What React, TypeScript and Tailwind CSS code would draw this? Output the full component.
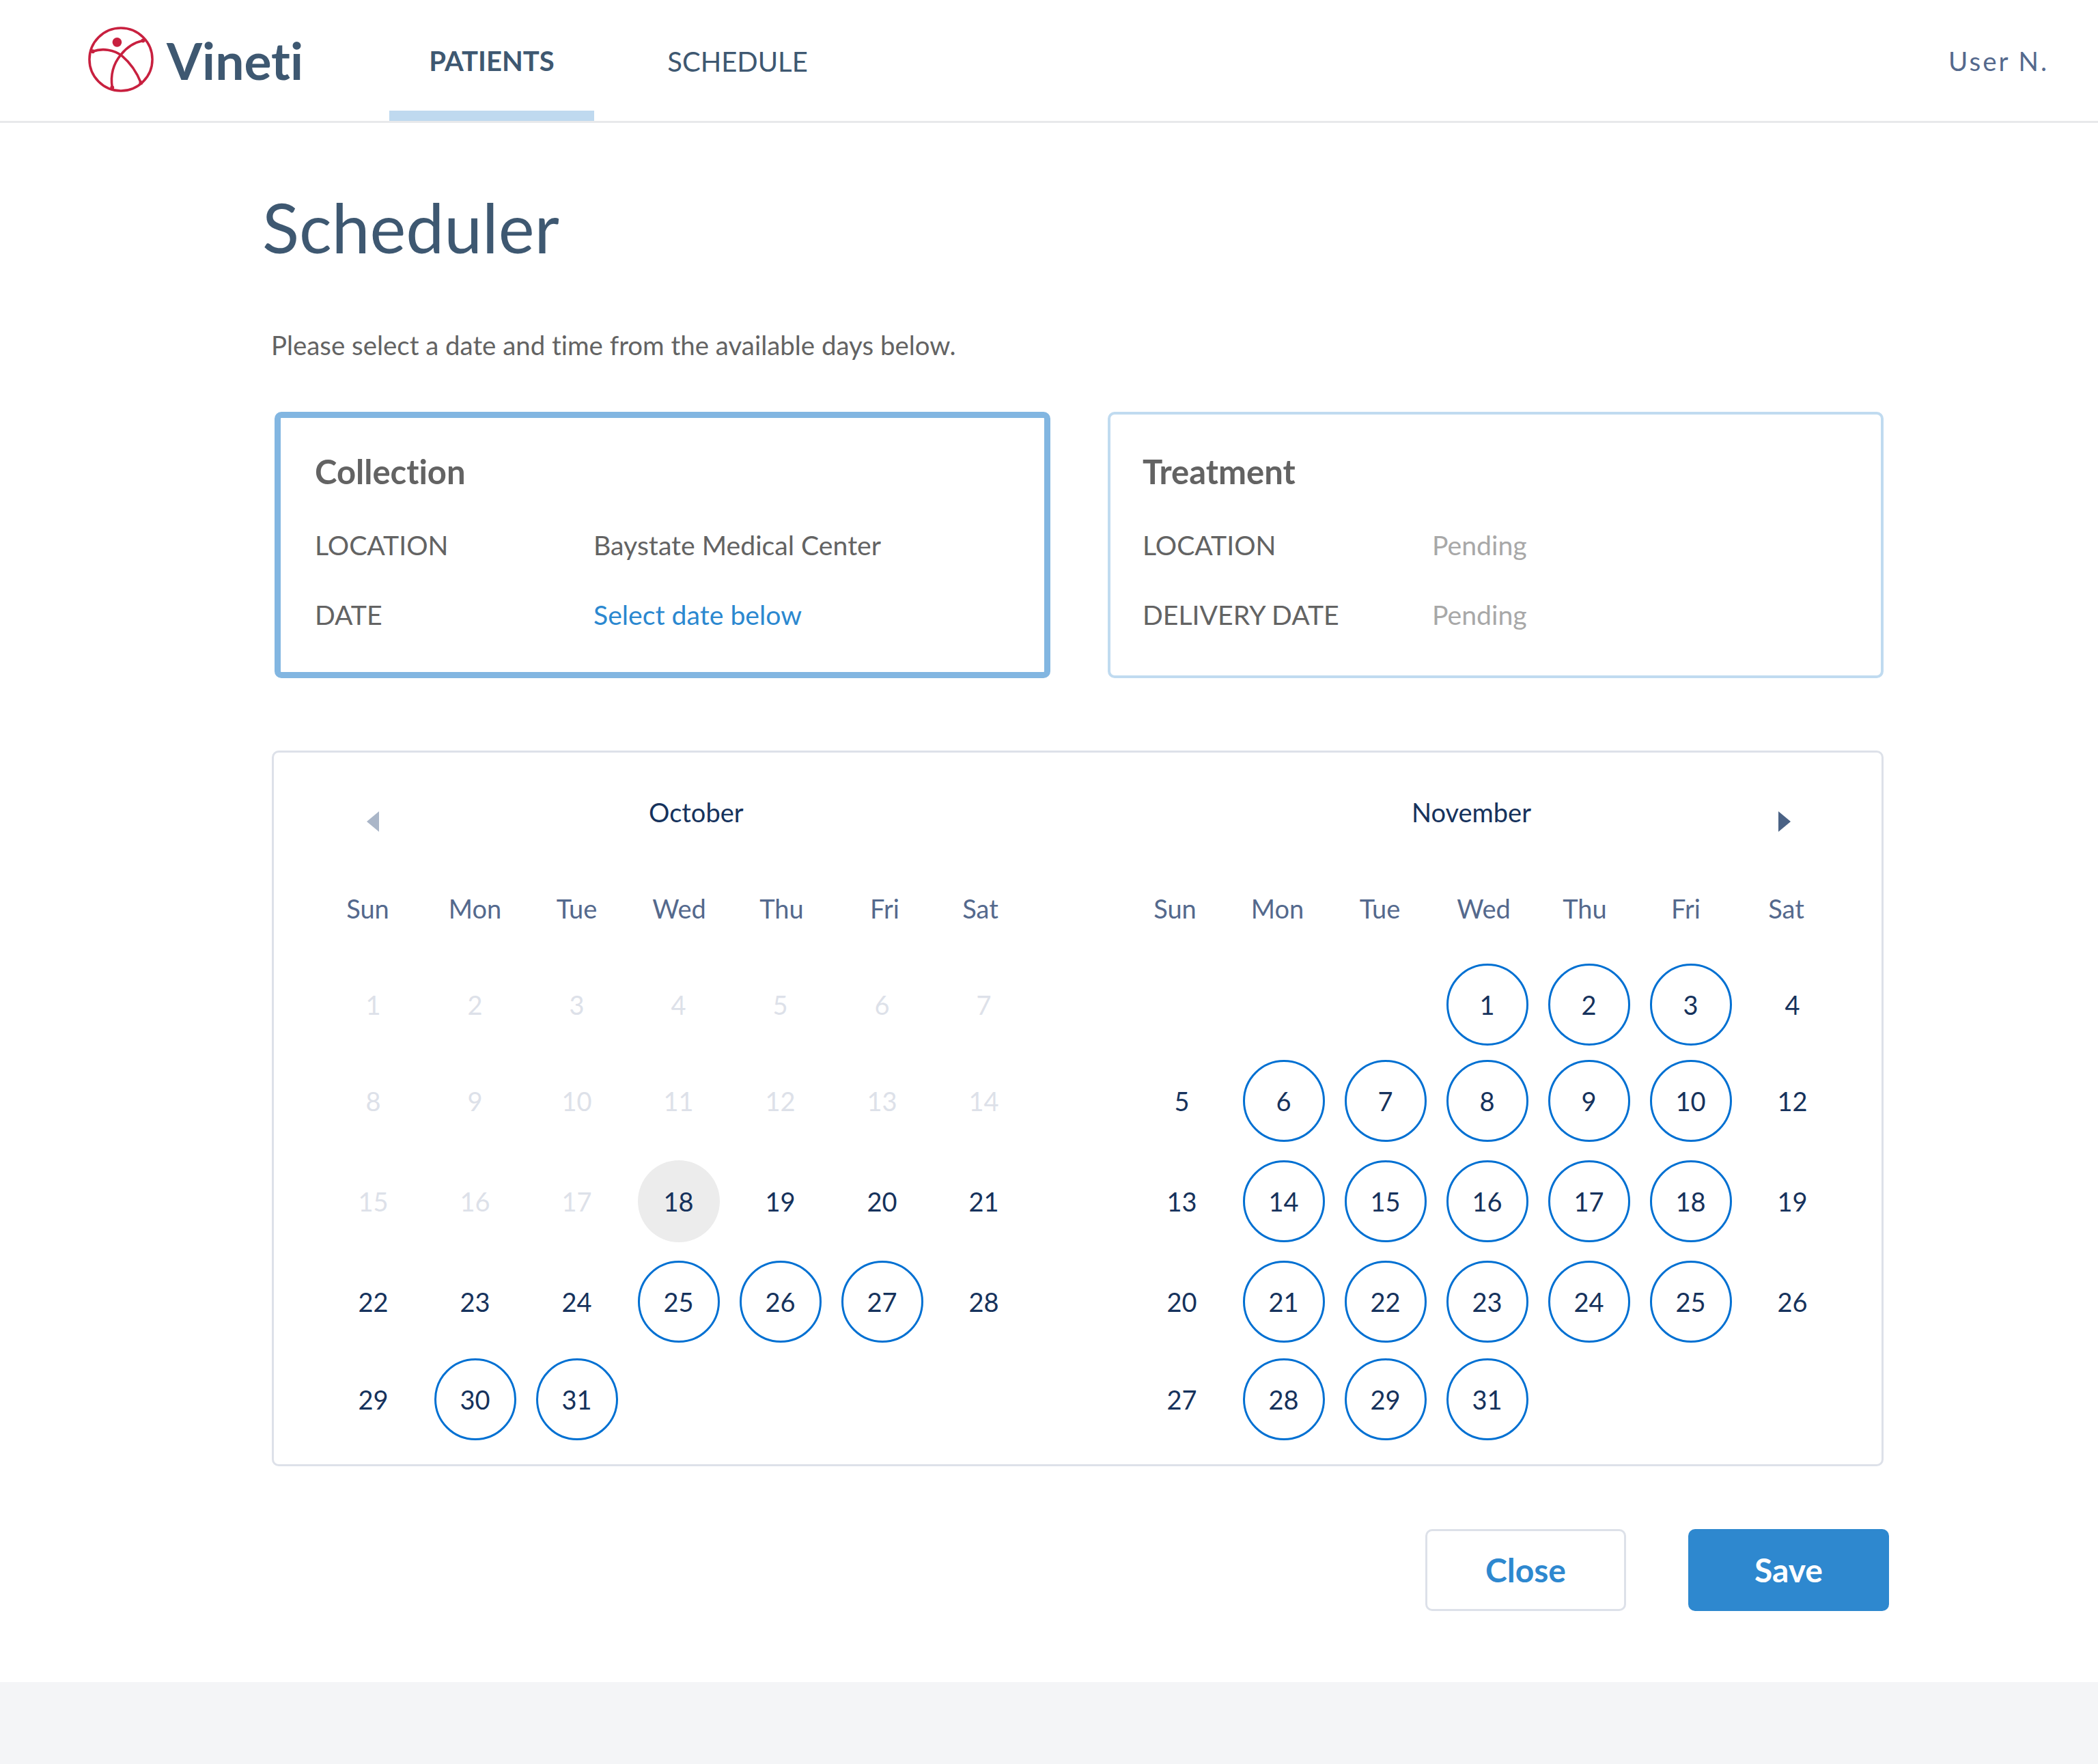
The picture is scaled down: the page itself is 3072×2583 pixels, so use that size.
import React from 'react';

const font = "font-['Lato','Open_Sans',sans-serif] [font-variant-ligatures:none]";

const Logo = () => (
    <svg viewBox="0 0 100 100" className="w-[98px] h-[98px] shrink-0 mb-[4px]" fill="none" stroke="#c8203f" strokeWidth="3.6">
        <circle cx="50" cy="50" r="47" />
        <path d="M8 38 C22 33 40 35 52 45 C65 56 74 70 80 85" />
        <path d="M83 22 C68 25 58 33 50 43 C40 55 34 72 37 92" />
        <circle cx="44.3" cy="24.3" r="7" fill="#c8203f" stroke="none" />
        <circle cx="8" cy="38" r="3" fill="#c8203f" stroke="none" />
        <circle cx="83" cy="22" r="3" fill="#c8203f" stroke="none" />
        <circle cx="80" cy="85" r="3" fill="#c8203f" stroke="none" />
        <circle cx="37" cy="92" r="3" fill="#c8203f" stroke="none" />
    </svg>
);

type CellKind = 'off' | 'plain' | 'open' | 'today' | 'empty';

const Day = ({ n, kind }: { n: number; kind: CellKind }) => {
    if (kind === 'empty') return <div className="h-[120px] w-[120px]" />;
    const base = 'h-[120px] w-[120px] rounded-full flex items-center justify-center text-[38px] leading-none';
    if (kind === 'off') return <div className={`${base} text-[#dde1e9]`}>{n}</div>;
    if (kind === 'today') return <div className={`${base} bg-[#ececec] text-[#16325c]`}>{n}</div>;
    if (kind === 'open') return <div className={`${base} border-[3px] border-[#0070d2] text-[#16325c]`}>{n}</div>;
    return <div className={`${base} text-[#16325c]`}>{n}</div>;
};

const weekDays = ['Sun', 'Mon', 'Tue', 'Wed', 'Thu', 'Fri', 'Sat'];
const rowGaps = ['', 'mt-[21px]', 'mt-[27px]', 'mt-[27px]', 'mt-[23px]'];

const october: [number, CellKind][][] = [
    [1, 2, 3, 4, 5, 6, 7].map(n => [n, 'off']),
    [8, 9, 10, 11, 12, 13, 14].map(n => [n, 'off']),
    [[15, 'off'], [16, 'off'], [17, 'off'], [18, 'today'], [19, 'plain'], [20, 'plain'], [21, 'plain']],
    [[22, 'plain'], [23, 'plain'], [24, 'plain'], [25, 'open'], [26, 'open'], [27, 'open'], [28, 'plain']],
    [[29, 'plain'], [30, 'open'], [31, 'open'], [0, 'empty'], [0, 'empty'], [0, 'empty'], [0, 'empty']],
];

const november: [number, CellKind][][] = [
    [[0, 'empty'], [0, 'empty'], [0, 'empty'], [1, 'open'], [2, 'open'], [3, 'open'], [4, 'plain']],
    [[5, 'plain'], [6, 'open'], [7, 'open'], [8, 'open'], [9, 'open'], [10, 'open'], [12, 'plain']],
    [[13, 'plain'], [14, 'open'], [15, 'open'], [16, 'open'], [17, 'open'], [18, 'open'], [19, 'plain']],
    [[20, 'plain'], [21, 'open'], [22, 'open'], [23, 'open'], [24, 'open'], [25, 'open'], [26, 'plain']],
    [[27, 'plain'], [28, 'open'], [29, 'open'], [31, 'open'], [0, 'empty'], [0, 'empty'], [0, 'empty']],
];

const octoberPads = ['pr-[16px]', '', '', 'pl-[2px]', 'pl-[4px]', 'pl-[8px]', 'pr-[10px]'];
const novemberPads = ['pr-[20px]', 'pr-[18px]', 'pr-[16px]', 'pr-[10px]', 'pr-[12px]', 'pr-[14px]', 'pr-[18px]'];

const Month = ({ rows, head, pads }: { rows: [number, CellKind][][]; head: React.ReactNode; pads: string[] }) => (
    <div className="w-[1043px] shrink-0">
        <div className="flex h-[84px] text-[38px] leading-[56px] text-[#16325c]">{head}</div>
        <div className="grid grid-cols-7 mt-[57px] text-[38px] text-[#54698d]">
            {weekDays.map((d, i) => (
                <div key={d} className={`text-center h-[56px] leading-[56px] ${pads[i]}`}>{d}</div>
            ))}
        </div>
        <div className="mt-[53px] flex flex-col">
            {rows.map((row, i) => (
                <div key={i} className={`grid grid-cols-7 justify-items-center ${rowGaps[i]}`}>
                    {row.map(([n, kind], j) => (
                        <Day key={j} n={n} kind={kind} />
                    ))}
                </div>
            ))}
        </div>
    </div>
);

const InfoCard = ({ title, rows, active, labelWidth }: { title: string; rows: [string, string, string][]; active?: boolean; labelWidth: string }) => (
    <div className={`w-[1136px] h-[390px] rounded-[10px] ${active ? 'border-[9px] border-[#82b6e1] pl-[50px] pt-[48px]' : 'border-[4px] border-[#c0dbf0] pl-[47px] pt-[53px]'}`}>
        <div className="text-[49px] font-bold text-[#636363] leading-[60px]">{title}</div>
        <div className="mt-[48px] flex flex-col gap-[42px] text-[39.2px] leading-[60px]">
            {rows.map(([label, value, cls]) => (
                <div key={label} className="flex">
                    <div className={`${labelWidth} text-[#636363]`}>{label}</div>
                    <div className={cls}>{value}</div>
                </div>
            ))}
        </div>
    </div>
);

const App = () => {
    return (
        <div className={`${font} w-[3072px] h-[2583px] bg-white flex flex-col`}>
            <header className="h-[180px] border-b-[3px] border-[#e8e9eb] flex pl-[128px] pr-[72px] shrink-0">
                <div className="flex items-center gap-[18px] w-[442px] shrink-0">
                    <Logo />
                    <span className="text-[75px] font-bold text-[#3e5871] leading-none">Vineti</span>
                </div>
                <nav className="flex flex-1 text-[40px]">
                    <div className="w-[300px] flex items-center justify-center font-bold text-[#3e5871] border-b-[15px] border-[#bfd9ef] pt-[15px]">PATIENTS</div>
                    <div className="w-[420px] flex items-center justify-center text-[#3e5871] pt-[2px]">SCHEDULE</div>
                </nav>
                <div className="flex items-center text-[38.5px] tracking-[3px] text-[#54698d] pt-[2px]">User N.</div>
            </header>

            <main className="flex-1 pl-[384px]">
                <h1 className="text-[100px] leading-none text-[#3e5871] mt-[102px]">Scheduler</h1>
                <p className="ml-[13px] mt-[98px] text-[38.4px] leading-[50px] text-[#636363]">Please select a date and time from the available days below.</p>

                <div className="ml-[18px] mt-[73px] flex gap-[84px]">
                    <InfoCard
                        active
                        title="Collection"
                        labelWidth="w-[408px]"
                        rows={[
                            ['LOCATION', 'Baystate Medical Center', 'text-[#636363]'],
                            ['DATE', 'Select date below', 'text-[#2b88d0]'],
                        ]}
                    />
                    <InfoCard
                        title="Treatment"
                        labelWidth="w-[424px]"
                        rows={[
                            ['LOCATION', 'Pending', 'text-[#a8a8a8]'],
                            ['DELIVERY DATE', 'Pending', 'text-[#a8a8a8]'],
                        ]}
                    />
                </div>

                <section className="ml-[14px] mt-[106px] w-[2360px] h-[1048px] border-[3px] border-[#dde1e9] rounded-[10px] pl-[71px] pt-[59px] flex gap-[141px]">
                    <Month
                        rows={october}
                        pads={octoberPads}
                        head={
                            <>
                                <div className="ml-[65px] mt-[27px] w-0 h-0 border-y-[15px] border-y-transparent border-r-[18px] border-r-[#aab6c8]" />
                                <div className="ml-[395px]">October</div>
                            </>
                        }
                    />
                    <Month
                        rows={november}
                        pads={novemberPads}
                        head={
                            <>
                                <div className="ml-[411px]">November</div>
                                <div className="ml-[362px] mt-[27px] w-0 h-0 border-y-[15px] border-y-transparent border-l-[18px] border-l-[#4a6285]" />
                            </>
                        }
                    />
                </section>

                <div className="ml-[14px] mt-[92px] w-[2368px] flex justify-end gap-[91px]">
                    <button className="w-[294px] h-[120px] rounded-[10px] border-[3px] border-[#dde1e9] text-[48px] font-bold text-[#2e88cf]">Close</button>
                    <button className="w-[294px] h-[120px] rounded-[10px] bg-[#2e88cf] text-[48px] font-bold text-white">Save</button>
                </div>
            </main>

            <footer className="h-[120px] bg-[#f4f5f7] shrink-0" />
        </div>
    );
};

export default App;
